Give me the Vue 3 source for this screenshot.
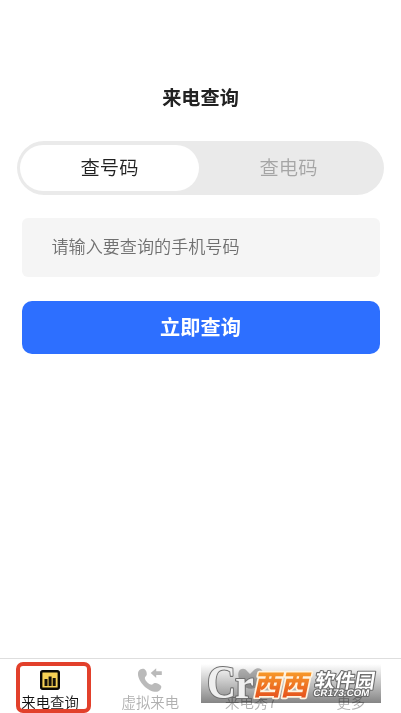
<template>
  <div class="page">
    <h1 class="title">来电查询</h1>

    <div class="switcher">
      <button :class="{ active: mode === 'number' }" @click="mode = 'number'">查号码</button>
      <button :class="{ active: mode === 'phone' }" @click="mode = 'phone'">查电码</button>
    </div>

    <form class="query-form" @submit.prevent>
      <input v-model="phone" type="tel" placeholder="请输入要查询的手机号码">
      <button type="submit" class="submit-btn">立即查询</button>
    </form>

    <nav class="tabbar">
      <div
        v-for="tab in tabs"
        :key="tab.id"
        class="tab"
        :class="{ active: current === tab.id }"
        @click="current = tab.id"
      >
        <svg v-if="tab.id === 'query'" class="icon" viewBox="0 0 20 20">
          <rect x="1.2" y="1.2" width="17.6" height="17.6" rx="1.5" fill="#f7d254" stroke="#0b0a05" stroke-width="2.4" />
          <path d="M4.5 9h3v7h-3zM8.600 6.500h3V16h-3zM12.700 8h3v8h-3z" fill="#15120a" />
        </svg>
        <svg v-else-if="tab.id === 'virtual'" class="icon phone" viewBox="0 0 26 26">
          <path d="M1.300 4.800C2.200 2.400 5.300 1 7.300 2c1.900 1 2.800 4.100 2.400 5.800-.4 1.500-2.100 2-1.800 3.600.6 2.500 3.500 5.400 6 6.200 1.600.5 2.300-1.400 3.900-1.600 2-.3 5.400 1.500 6.300 3.100.9 1.900-1.200 4.700-3.100 5.400C17.300 25.800 11 23 7 18.900 3.100 14.800-.1 9 1.300 4.800z" />
          <path d="M13.700 6.100 19.200 1.200v3h5.600v3.900h-5.600V11z" />
        </svg>
        <svg v-else-if="tab.id === 'show'" class="icon phone" viewBox="0 0 26 26">
          <path d="M1 4c2-3 6-3 8 0l3 3 4-4c3-3 8-2 9 2 0 4-2 6-5 7 2 4 0 8-3 9-5 2-10 0-13-4C1 13-1 8 1 4z" />
        </svg>
        <span v-else class="icon"></span>
        <span class="label">{{ tab.label }}</span>
      </div>
    </nav>

    <div class="focus-frame"></div>

    <div class="watermark">
      <svg viewBox="0 0 180 39">
        <defs>
          <linearGradient id="orange" x1="0" y1="0" x2="0" y2="1">
            <stop offset="0.2" stop-color="#f9a02a" />
            <stop offset="0.9" stop-color="#e5501c" />
          </linearGradient>
        </defs>
        <g class="serif">
          <text x="6" y="33.500" font-size="47" textLength="29" lengthAdjust="spacingAndGlyphs">C</text>
          <text
            class="tail"
            x="0"
            y="0"
            font-size="43"
            textLength="19"
            lengthAdjust="spacingAndGlyphs"
            transform="translate(34 33.500)"
          >r</text>
        </g>
        <text
          class="brand"
          x="0"
          y="0"
          textLength="55"
          lengthAdjust="spacingAndGlyphs"
          transform="translate(52 30.500) skewX(-12)"
        >西西</text>
        <g class="side">
          <text x="0" y="0" font-size="20" textLength="60" transform="translate(113 24) skewX(-9)">软件园</text>
          <text
            class="site"
            x="0"
            y="0"
            textLength="56"
            lengthAdjust="spacingAndGlyphs"
            transform="translate(112 32) skewX(-9)"
          >CR173.COM</text>
        </g>
      </svg>
    </div>
  </div>
</template>

<script setup>
import { ref } from 'vue';

const mode = ref('number');
const phone = ref('');
const current = ref('query');

const tabs = [
  { id: 'query', label: '来电查询' },
  { id: 'virtual', label: '虚拟来电' },
  { id: 'show', label: '来电秀7' },
  { id: 'more', label: '更多' }
];
</script>

<style>
body {
  margin: 0;
  background: #fff;
}
</style>

<style scoped>
.page {
  position: relative;
  display: flex;
  flex-direction: column;
  box-sizing: border-box;
  height: 100vh;
  padding-top: 82px;
  overflow: hidden;
  background: #fff;
  font-family: "Noto Sans CJK SC", sans-serif;
}

button,
input {
  border: none;
  outline: none;
  font-family: inherit;
}

.title {
  margin: 0;
  height: 30px;
  line-height: 30px;
  font-size: 19.2px;
  font-weight: bold;
  text-align: center;
  color: #222;
}

.switcher {
  display: flex;
  box-sizing: border-box;
  height: 54px;
  margin: 29px 17px 0;
  padding: 4px 6px 4px 3px;
  border-radius: 27px;
  background: #eaeaea;
}

.switcher button {
  flex: 1;
  padding: 0 0 2px;
  border-radius: 23px;
  background: none;
  font-size: 19.3px;
  font-weight: 350;
  line-height: 44px;
  color: #a5a5a5;
}

.switcher button.active {
  background: #fff;
  color: #222;
}

.query-form {
  display: flex;
  flex-direction: column;
  gap: 24px;
  margin: 23px 21.5px 0;
}

.query-form input {
  box-sizing: border-box;
  width: 100%;
  height: 59px;
  padding: 0 30px 4px;
  border-radius: 6px;
  background: #f5f5f5;
  font-size: 17.1px;
  font-weight: 350;
}

.query-form input::placeholder {
  color: #707070;
}

.submit-btn {
  height: 53px;
  padding: 0 0 3px;
  border-radius: 10px;
  background: #2d6fff;
  color: #fff;
  font-size: 20.2px;
  font-weight: bold;
}

.tabbar {
  display: flex;
  box-sizing: border-box;
  height: 55px;
  margin-top: auto;
  border-top: 1px solid #dedede;
}

.tab {
  flex: 1;
  display: flex;
  flex-direction: column;
  align-items: center;
  padding-top: 11px;
  color: #b0b0b0;
}

.tab.active {
  color: #111;
}

.icon {
  display: block;
  width: 20px;
  height: 20px;
}

.phone {
  width: 26px;
  height: 26px;
  margin: -3px 0;
  fill: #bababa;
}

.label {
  margin-top: 2px;
  font-size: 14.4px;
  font-weight: 350;
  line-height: 20px;
  white-space: nowrap;
}

.focus-frame {
  position: absolute;
  left: 16px;
  top: 662px;
  box-sizing: border-box;
  width: 75px;
  height: 51px;
  border: 4px solid #e2402b;
  border-radius: 7px;
}

/* Логотип поверх нижней панели */
.watermark {
  position: absolute;
  left: 201px;
  top: 664px;
  width: 180px;
  height: 39px;
}

.watermark::before {
  content: '';
  position: absolute;
  inset: 0;
  background: linear-gradient(#fff, #858585);
  mix-blend-mode: multiply;
}

.watermark svg {
  position: relative;
  display: block;
  width: 180px;
  height: 39px;
}

.watermark text {
  paint-order: stroke fill;
  stroke-linejoin: round;
}

.serif {
  font-family: "Liberation Serif", serif;
  font-weight: bold;
  fill: #efefef;
  stroke: #707070;
  stroke-width: 2.2px;
}

.brand {
  font-size: 28px;
  font-weight: 900;
  fill: url(#orange);
  stroke: #fff3df;
  stroke-width: 3.5px;
}

.side {
  font-weight: bold;
  fill: #fff;
  stroke: #6c6c6c;
  stroke-width: 2.2px;
}

.site {
  font-family: "Liberation Sans", sans-serif;
  font-size: 9.5px;
}
</style>
